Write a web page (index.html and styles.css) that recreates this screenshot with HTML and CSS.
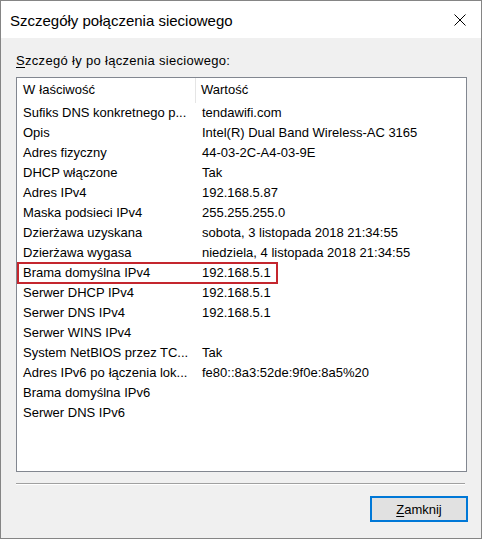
FILE: index.html
```html
<!DOCTYPE html>
<html lang="pl">
<head>
<meta charset="utf-8">
<title>Szczegóły połączenia sieciowego</title>
<link rel="stylesheet" href="styles.css">
</head>
<body>
<div class="window">
  <div class="titlebar">
    <span class="title">Szczegóły połączenia sieciowego</span>
    <span class="close" aria-label="Zamknij">
      <svg width="12" height="12" viewBox="0 0 12 12"><path d="M0.5 0.5 L11.5 11.5 M11.5 0.5 L0.5 11.5" stroke="#000" stroke-width="1" fill="none"/></svg>
    </span>
  </div>
  <div class="content">
    <div class="label"><u>S</u>zczeg<span class="kern">ó</span>ły p<span class="kern">o</span>łączenia sieciowego:</div>
    <div class="list">
      <div class="row head">
        <div class="c1"><span class="kern">W</span>łaściwość</div>
        <div class="c2">Wartość</div>
      </div>
      <div class="row"><div class="c1">Sufiks DNS konkretnego p...</div><div class="c2">tendawifi.com</div></div>
      <div class="row"><div class="c1">Opis</div><div class="c2">Intel(R) Dual Band Wireless-AC 3165</div></div>
      <div class="row"><div class="c1">Adres fizyczny</div><div class="c2">44-03-2C-A4-03-9E</div></div>
      <div class="row"><div class="c1">DHCP włączone</div><div class="c2">Tak</div></div>
      <div class="row"><div class="c1">Adres IPv4</div><div class="c2">192.168.5.87</div></div>
      <div class="row"><div class="c1">Maska podsieci IPv4</div><div class="c2">255.255.255.0</div></div>
      <div class="row"><div class="c1">Dzierżawa uzyskana</div><div class="c2">sobota, 3 listopada 2018 21:34:55</div></div>
      <div class="row"><div class="c1">Dzierżawa wygasa</div><div class="c2">niedziela, 4 listopada 2018 21:34:55</div></div>
      <div class="row marked"><div class="c1">Brama domyślna IPv4</div><div class="c2">192.168.5.1</div><span class="mark"></span></div>
      <div class="row"><div class="c1">Serwer DHCP IPv4</div><div class="c2">192.168.5.1</div></div>
      <div class="row"><div class="c1">Serwer DNS IPv4</div><div class="c2">192.168.5.1</div></div>
      <div class="row"><div class="c1">Serwer WINS IPv4</div><div class="c2"></div></div>
      <div class="row"><div class="c1">System NetBIOS przez TC...</div><div class="c2">Tak</div></div>
      <div class="row"><div class="c1">Adres IPv6 p<span class="kern">o</span>łączenia lok...</div><div class="c2">fe80::8a3:52de:9f0e:8a5%20</div></div>
      <div class="row"><div class="c1">Brama domyślna IPv6</div><div class="c2"></div></div>
      <div class="row"><div class="c1">Serwer DNS IPv6</div><div class="c2"></div></div>
    </div>
    <div class="separator"></div>
    <div class="actions">
      <button class="btn" type="button"><u>Z</u>amknij</button>
    </div>
  </div>
</div>
</body>
</html>
```
FILE: styles.css
```css
* { box-sizing: border-box; }
html, body { margin: 0; padding: 0; }
body {
  font-family: "Liberation Sans", Arial, sans-serif;
  font-size: 13px;
  color: #000;
  background: #fff;
}
.window {
  width: 482px;
  height: 539px;
  border: 1px solid #858585;
  display: flex;
  flex-direction: column;
}
.titlebar {
  height: 37px;
  background: #fff;
  display: flex;
  align-items: center;
  padding-left: 9px;
  padding-right: 15px;
}
.title {
  font-size: 15px;
  flex: 1;
  margin-top: 1px;
}
.close {
  width: 12px;
  height: 12px;
  display: flex;
}
.content {
  flex: 1;
  background: #f0f0f0;
  padding: 15px 14px 0 15px;
  display: flex;
  flex-direction: column;
}
.label {
  line-height: 16px;
  height: 16px;
  letter-spacing: 0.3px;
}
.label u, .btn u { text-decoration: underline; text-underline-offset: 2px; }
.kern { margin-right: 4px; }
.list {
  margin-top: 8px;
  height: 395px;
  width: 451px;
  border: 1px solid #828790;
  background: #fff;
}
.row {
  position: relative;
  display: flex;
  height: 20px;
  line-height: 20px;
  white-space: nowrap;
}
.row.head {
  height: 25px;
  line-height: 23px;
}
.c1 {
  width: 179px;
  padding-left: 6px;
  overflow: hidden;
}
.c2 {
  flex: 1;
  padding-left: 6px;
}
.head .c1 { border-right: 1px solid #e5e5e5; }
.head .c2 { padding-left: 5px; }
.mark {
  position: absolute;
  left: 0;
  top: -1px;
  width: 261px;
  height: 22px;
  border: 2px solid #c4262e;
}
.separator {
  margin-top: 11px;
  width: 449px;
  height: 2px;
  border-top: 1px solid #a0a0a0;
  border-bottom: 1px solid #fff;
}
.actions {
  display: flex;
  justify-content: flex-end;
  margin-top: 11px;
  margin-right: -1px;
}
.btn {
  width: 98px;
  height: 26px;
  border: 2px solid #0078d7;
  background: #e1e1e1;
  font-family: "Liberation Sans", Arial, sans-serif;
  font-size: 13px;
  color: #000;
  padding: 0;
}
```
